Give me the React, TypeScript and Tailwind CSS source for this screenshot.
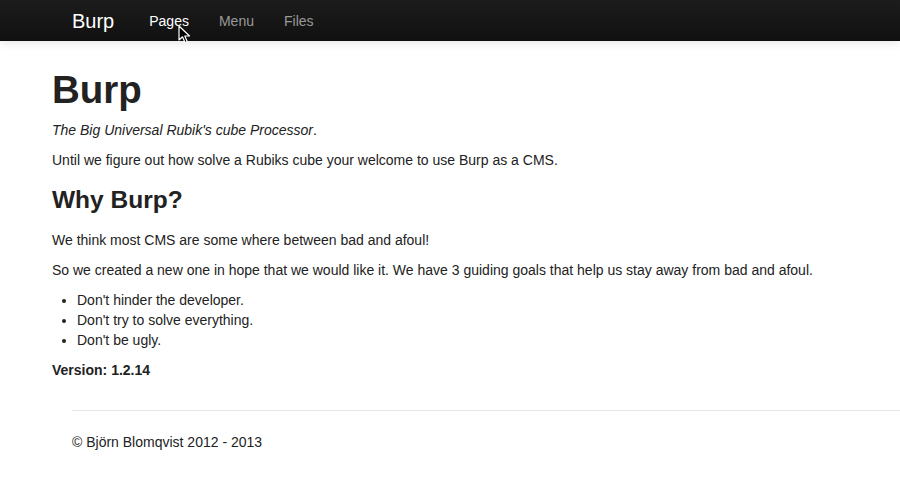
const font = { fontFamily: '"Liberation Sans", Helvetica, Arial, sans-serif' };

function Cursor() {
  return (
    <svg
      className="pointer-events-none absolute left-[178px] top-[25px]"
      width="13"
      height="19"
      viewBox="0 0 13 19"
    >
      <path
        d="M1 1 L1 15 L4.5 11.8 L7 17.5 L9.2 16.5 L6.8 11 L11.5 11 Z"
        fill="#000"
        stroke="#fff"
        strokeWidth="1.2"
        strokeLinejoin="round"
      />
    </svg>
  );
}

export default function App() {
  return (
    <div className="relative min-h-[489px] bg-white text-[14px] leading-5 text-[#222]" style={font}>
      <div className="relative h-[41px] border-b border-[#0d0d0d] bg-gradient-to-b from-[#1c1c1c] to-[#111] shadow-[0_1px_10px_rgba(0,0,0,0.12)]">
        <div className="flex h-10 items-center pl-[52px] pt-px">
          <a className="px-5 text-[20px] leading-5 text-white">Burp</a>
          <ul className="flex">
            <li className="px-[15px] text-white">Pages</li>
            <li className="px-[15px] text-[#999]">Menu</li>
            <li className="px-[15px] text-[#999]">Files</li>
          </ul>
        </div>
        <Cursor />
      </div>

      <div className="px-[52px] pt-[19px]">
        <h1 className="my-[10px] text-[38.5px] font-bold leading-10 text-[#222]">Burp</h1>
        <p className="mb-[10px]">
          <em>The Big Universal Rubik's cube Processor</em>.
        </p>
        <p className="mb-[10px]">
          Until we figure out how solve a Rubiks cube your welcome to use Burp as a CMS.
        </p>
        <h3 className="my-[10px] text-[24.5px] font-bold leading-10 text-[#222]">Why Burp?</h3>
        <p className="mb-[10px]">We think most CMS are some where between bad and afoul!</p>
        <p className="mb-[10px]">
          So we created a new one in hope that we would like it. We have 3 guiding goals that help us stay away from bad and afoul.
        </p>
        <ul className="mb-[10px] ml-[25px] list-disc">
          <li>Don't hinder the developer.</li>
          <li>Don't try to solve everything.</li>
          <li>Don't be ugly.</li>
        </ul>
        <p className="mb-[10px]">
          <strong className="text-[#222]">Version: 1.2.14</strong>
        </p>
      </div>

      <div className="pl-[72px]">
        <hr className="mt-[30px] mb-5 border-t border-b border-t-[#e5e5e5] border-b-white" />
        <p className="text-[#222]">© Björn Blomqvist 2012 - 2013</p>
      </div>
    </div>
  );
}
